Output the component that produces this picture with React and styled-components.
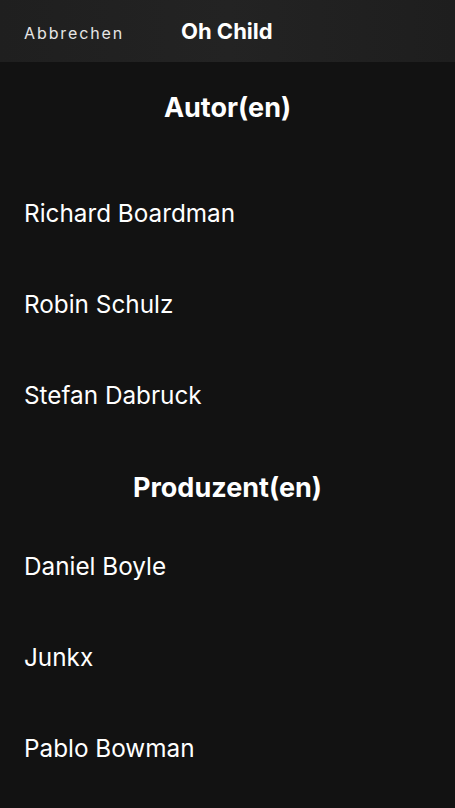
import React from 'react';
import styled, { createGlobalStyle } from 'styled-components';

const Global = createGlobalStyle`
  html, body { margin: 0; padding: 0; background: #121212; }
  body { font-family: Inter, "Noto Sans", sans-serif; -webkit-font-smoothing: antialiased; }
`;

const Screen = styled.div`
  width: 455px;
  min-height: 808px;
  background: #121212;
  color: #fff;
`;

const Header = styled.header`
  height: 62px;
  display: flex;
  align-items: center;
  padding: 0 24px;
  box-sizing: border-box;
  background: linear-gradient(90deg, #1f1f1f, #232323 50%, #1e1e1e);
`;

const Cancel = styled.button`
  background: none;
  border: 0;
  padding: 0;
  margin-top: 4px;
  color: #e6e6e6;
  font-family: inherit;
  font-size: 16px;
  letter-spacing: 1.9px;
  width: 157px;
  text-align: left;
`;

const Title = styled.h1`
  margin: 0;
  font-size: 22px;
  font-weight: 700;
`;

const SectionTitle = styled.h2`
  margin: 0;
  text-align: center;
  font-size: 27px;
  font-weight: 700;
  line-height: 32px;
  padding: ${p => p.$top}px 0 ${p => p.$bottom}px;
`;

const Row = styled.div`
  height: 91px;
  display: flex;
  align-items: center;
  padding: 0 24px;
  font-size: 24.3px;
`;

const sections = [
  { title: 'Autor(en)', top: 30, bottom: 43.5, names: ['Richard Boardman', 'Robin Schulz', 'Stefan Dabruck'] },
  { title: 'Produzent(en)', top: 31, bottom: 17, names: ['Daniel Boyle', 'Junkx', 'Pablo Bowman'] },
];

export default function App() {
  return (
    <Screen>
      <Global />
      <Header>
        <Cancel>Abbrechen</Cancel>
        <Title>Oh Child</Title>
      </Header>
      {sections.map(s => (
        <section key={s.title}>
          <SectionTitle $top={s.top} $bottom={s.bottom}>{s.title}</SectionTitle>
          {s.names.map(n => <Row key={n}>{n}</Row>)}
        </section>
      ))}
    </Screen>
  );
}
